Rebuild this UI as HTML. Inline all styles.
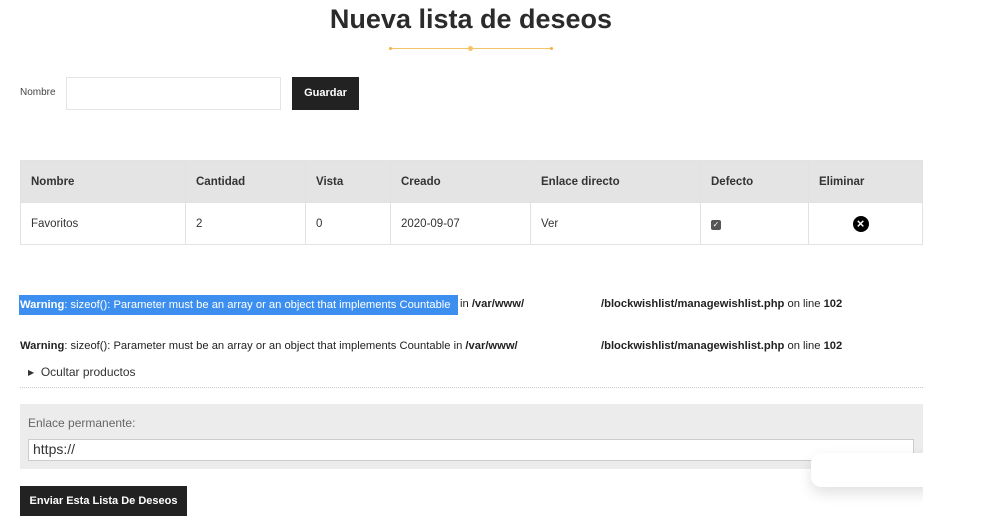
<!DOCTYPE html>
<html><head><meta charset="utf-8"><style>
*{margin:0;padding:0;box-sizing:border-box}
body{width:1000px;height:516px;overflow:hidden;background:#fff;font-family:"Liberation Sans",Arial,sans-serif;color:#333;position:relative}
.a{position:absolute}
h1{position:absolute;top:4px;left:0;width:942px;text-align:center;font-size:27px;font-weight:bold;color:#2b2b2b}
table{position:absolute;left:20px;top:160px;width:903px;border-collapse:collapse;font-size:11.5px}
td,th{border:1px solid #e2e2e2;padding:0 10px;text-align:left;height:42px}
th{background:#e4e4e4;font-weight:bold;color:#333}
.w{font-size:11.2px;color:#222;white-space:nowrap}
</style></head><body>
<h1>Nueva lista de deseos</h1>
<div class="a" style="left:390px;top:48px;width:162px;height:1px;background:#f6c468"></div>
<div class="a" style="left:389px;top:47px;width:3px;height:3px;background:#f6b040;border-radius:50%"></div>
<div class="a" style="left:468px;top:46px;width:5px;height:5px;background:#f6c468;border-radius:50%"></div>
<div class="a" style="left:550px;top:47px;width:3px;height:3px;background:#f6b040;border-radius:50%"></div>
<div class="a" style="left:20px;top:87px;font-size:10px;color:#444">Nombre</div>
<div class="a" style="left:66px;top:77px;width:215px;height:33px;border:1px solid #e4e4e4"></div>
<div class="a" style="left:292px;top:77px;width:67px;height:33px;background:#222;color:#fff;font-size:11px;font-weight:bold;text-align:center;line-height:33px">Guardar</div>
<table><tr><th style="width:165px">Nombre</th><th style="width:120px">Cantidad</th><th style="width:85px">Vista</th><th style="width:140px">Creado</th><th style="width:170px">Enlace directo</th><th style="width:108px">Defecto</th><th>Eliminar</th></tr>
<tr><td>Favoritos</td><td>2</td><td>0</td><td>2020-09-07</td><td>Ver</td><td><span style="display:inline-block;width:10px;height:10px;background:#555;border-radius:2px;color:#fff;font-size:8px;line-height:10px;text-align:center">✓</span></td><td style="text-align:center"><span style="display:inline-block;width:16px;height:16px;background:#000;border-radius:50%;color:#fff;font-size:13px;line-height:16px;font-weight:bold;margin-left:-10px">×</span></td></tr></table>
<div class="a w" style="left:19px;top:295px;height:20px;line-height:20px;background:#3d8fef;color:#fff;padding-left:1px;width:439px"><b>Warning</b>: sizeof(): Parameter must be an array or an object that implements Countable</div>
<div class="a w" style="left:460px;top:298px">in <b>/var/www/</b></div>
<div class="a w" style="left:601px;top:298px"><b>/blockwishlist/managewishlist.php</b> on line <b>102</b></div>
<div class="a w" style="left:20px;top:340px"><b>Warning</b>: sizeof(): Parameter must be an array or an object that implements Countable in <b>/var/www/</b></div>
<div class="a w" style="left:601px;top:340px"><b>/blockwishlist/managewishlist.php</b> on line <b>102</b></div>
<div class="a" style="left:28px;top:365px;font-size:12px;color:#333"><span style="font-size:8px;position:relative;top:-1px">▶</span>&nbsp; Ocultar productos</div>
<div class="a" style="left:20px;top:387px;width:903px;border-top:1px dotted #ccc"></div>
<div class="a" style="left:20px;top:404px;width:903px;height:65px;background:#ececec"></div>
<div class="a" style="left:28px;top:416px;font-size:12px;color:#666">Enlace permanente:</div>
<div class="a" style="left:28px;top:439px;width:886px;height:22px;background:#fff;border:1px solid #ccc;font-size:14px;color:#333;padding:1px 4px">https://</div>
<div class="a" style="left:20px;top:486px;width:167px;height:30px;background:#222;color:#fff;font-size:11px;font-weight:bold;text-align:center;line-height:30px">Enviar Esta Lista De Deseos</div>
<div class="a" style="left:811px;top:453px;width:140px;height:34px;background:#fff;border-radius:10px;box-shadow:0 6px 14px rgba(0,0,0,.12)"></div>
<div class="a" style="left:923px;top:440px;width:77px;height:76px;background:#fff"></div>
</body></html>
